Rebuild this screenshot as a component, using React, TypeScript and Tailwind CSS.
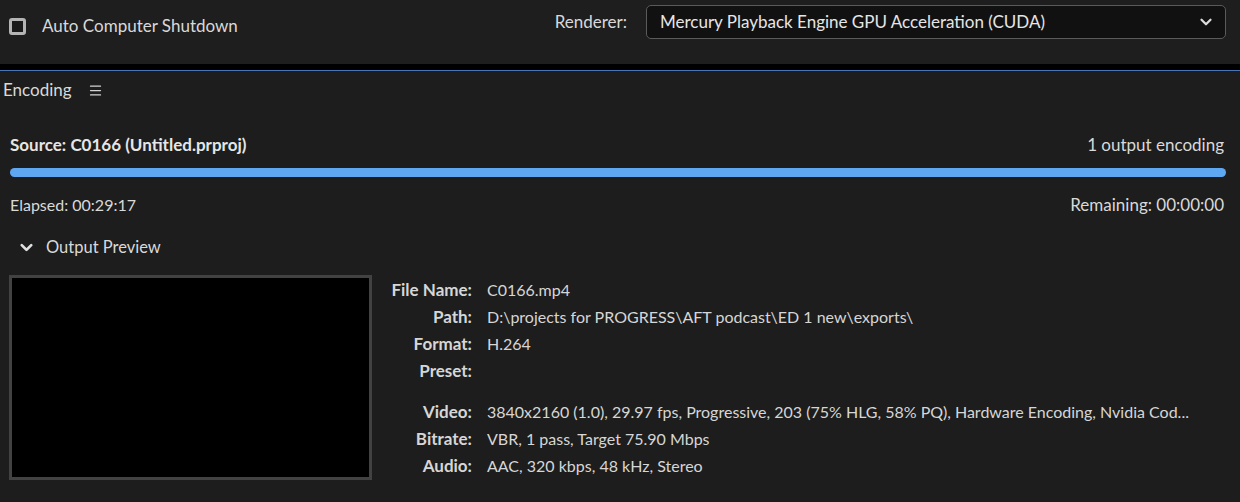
import { ChevronDown, Menu } from 'lucide-react';

const rows: [string, string][] = [
  ['File Name:', 'C0166.mp4'],
  ['Path:', 'D:\\projects for PROGRESS\\AFT podcast\\ED 1 new\\exports\\'],
  ['Format:', 'H.264'],
  ['Preset:', ''],
];

const rows2: [string, string][] = [
  ['Video:', '3840x2160 (1.0), 29.97 fps, Progressive, 203 (75% HLG, 58% PQ), Hardware Encoding, Nvidia Cod...'],
  ['Bitrate:', 'VBR, 1 pass, Target 75.90 Mbps'],
  ['Audio:', 'AAC, 320 kbps, 48 kHz, Stereo'],
];

function InfoRow({ label, value }: { label: string; value: string }) {
  return (
    <div className="flex h-[27px] items-center">
      <div className="w-[472px] shrink-0 text-right font-bold text-[#d6d6d6]">{label}</div>
      <div className="pl-[15px] whitespace-nowrap text-[16px] text-[#d6d6d6]">{value}</div>
    </div>
  );
}

export default function App() {
  return (
    <div className="w-[1240px] h-[502px] overflow-hidden bg-[#1d1d1d] text-[17px] text-[#d9d9d9] font-['Lato','Open_Sans',sans-serif]">
      <div className="h-[64px] bg-[#1e1e1e] flex items-start">
        <label className="flex items-center mt-[14px] ml-[9px]">
          <span className="w-[17px] h-[17px] rounded-[3px] border-[3px] border-[#b4b4b4] bg-[#1a1a1a]" />
          <span className="ml-[16px] -mt-[1px]">Auto Computer Shutdown</span>
        </label>
        <div className="flex items-center ml-auto mt-[5px] mr-[14px]">
          <span className="mr-[19px]">Renderer:</span>
          <div className="w-[580px] h-[34px] rounded-[5px] border border-[#5a5a5a] bg-[#111111] flex items-center pl-[13px] pr-[10px]">
            <span className="flex-1 text-[#e6e6e6]">Mercury Playback Engine GPU Acceleration (CUDA)</span>
            <ChevronDown size={18} strokeWidth={3} className="text-[#dcdcdc]" />
          </div>
        </div>
      </div>
      <div className="h-[6px] bg-black" />
      <div className="h-px bg-[#4a74b4]" />

      <div className="flex items-center h-[38px] pl-[3px]">
        <span>Encoding</span>
        <Menu size={15} strokeWidth={2} className="ml-[16px] text-[#d4d4d4]" />
      </div>

      <div className="pl-[10px] pr-[16px] pt-[24px]">
        <div className="flex justify-between items-center h-[24px]">
          <span className="font-bold text-[#e6e6e6]">Source: C0166 (Untitled.prproj)</span>
          <span>1 output encoding</span>
        </div>
        <div className="h-[9px] mt-[11px] mr-[-2px] rounded-full bg-[#5ea8f2]" />
        <div className="flex justify-between items-center h-[24px] mt-[16px]">
          <span className="text-[16px]">Elapsed: 00:29:17</span>
          <span>Remaining: 00:00:00</span>
        </div>
        <div className="flex items-center h-[24px] mt-[18px] pl-[7px]">
          <ChevronDown size={19} strokeWidth={3.4} className="text-[#e0e0e0]" />
          <span className="ml-[10px] text-[16.5px]">Output Preview</span>
        </div>
      </div>

      <div className="flex mt-[16px]">
        <div className="ml-[9px] w-[363px] h-[205px] border-[3px] border-[#424242] bg-black shrink-0" />
        <div className="-ml-[372px] mt-[1px]">
          {rows.map(([l, v]) => (
            <InfoRow key={l} label={l} value={v} />
          ))}
          <div className="h-[14px]" />
          {rows2.map(([l, v]) => (
            <InfoRow key={l} label={l} value={v} />
          ))}
        </div>
      </div>
    </div>
  );
}
